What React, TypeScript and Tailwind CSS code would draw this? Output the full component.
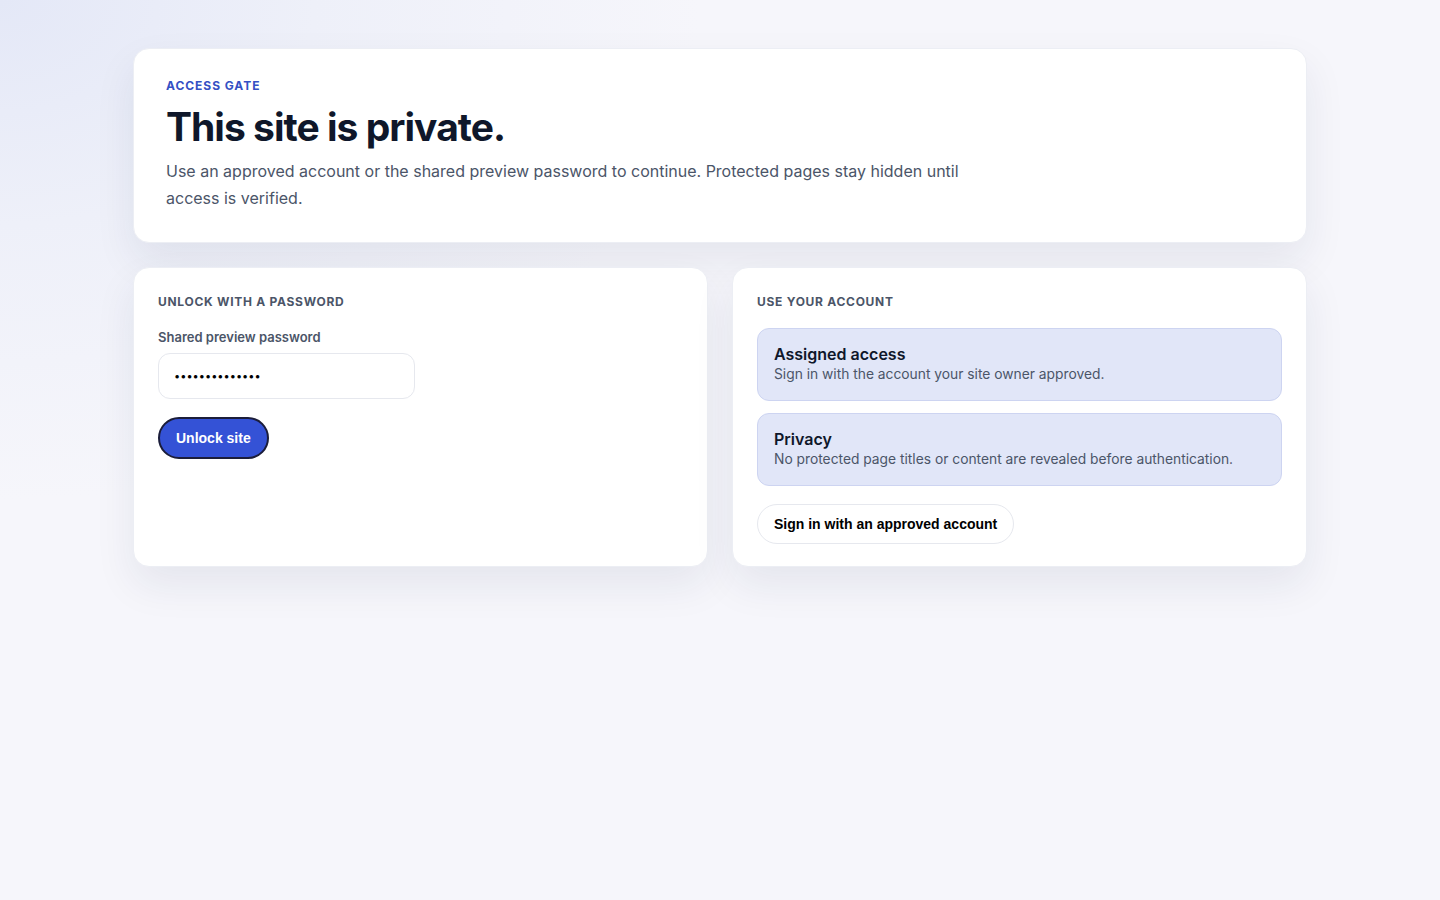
import React from 'react';

const infoCards = [
  { title: 'Assigned access', body: 'Sign in with the account your site owner approved.' },
  { title: 'Privacy', body: 'No protected page titles or content are revealed before authentication.' },
];

export default function App() {
  return (
    <div
      className="min-h-screen w-full bg-[#f6f6fb] bg-[radial-gradient(ellipse_700px_500px_at_0%_0%,#e4e8f7_0%,#eef0f9_45%,rgba(246,246,251,0)_100%)] text-slate-900"
      style={{ fontFamily: 'Inter, "Noto Sans", sans-serif' }}
    >
      <div className="mx-auto w-[1174px] pt-12 flex flex-col gap-6">
        {/* Header */}
        <section className="rounded-2xl border border-[#eceef4] bg-white px-8 pt-[29px] pb-[30px] shadow-[0_18px_40px_rgba(30,41,80,0.08)]">
          <p className="text-xs font-bold uppercase tracking-[0.08em] text-[#3450c4]">Access gate</p>
          <h1 className="mt-[9px] text-[39px] font-bold leading-[48px] tracking-[-0.025em] text-[#0f172a]">
            This site is private.
          </h1>
          <p className="mt-[7px] max-w-[820px] text-base leading-[27px] text-[#4b5568]">
            Use an approved account or the shared preview password to continue. Protected pages stay hidden until access is verified.
          </p>
        </section>

        <div className="grid grid-cols-2 gap-6">
          {/* Password */}
          <section className="h-[300px] rounded-2xl border border-[#eceef4] bg-white p-6 pt-[26px] shadow-[0_18px_40px_rgba(30,41,80,0.08)]">
            <h2 className="text-xs font-bold uppercase leading-4 tracking-[0.06em] text-[#4b5568]">Unlock with a password</h2>
            <label className="mt-[19px] block text-[13px] font-semibold leading-4 text-[#4b5568]">Shared preview password</label>
            <input
              type="password"
              defaultValue="previewaccess1"
              className="mt-2 block h-[46px] w-[257px] rounded-xl border border-[#e6e8ee] bg-white px-[15px] text-[11px] text-black outline-none"
            />
            <button
              className="mt-[18px] h-[42px] rounded-full border-2 border-[#1b1d3a] bg-[#3452d6] px-4 text-sm font-bold text-white"
              style={{ fontFamily: '"Liberation Sans", Arial, sans-serif' }}
            >
              Unlock site
            </button>
          </section>

          {/* Account */}
          <section className="h-[300px] rounded-2xl border border-[#eceef4] bg-white p-6 pt-[26px] shadow-[0_18px_40px_rgba(30,41,80,0.08)]">
            <h2 className="text-xs font-bold uppercase leading-4 tracking-[0.06em] text-[#4b5568]">Use your account</h2>
            <div className="mt-[18px] flex flex-col gap-3">
              {infoCards.map((c) => (
                <div key={c.title} className="h-[73px] rounded-xl border border-[#cdd4f1] bg-[#e1e6f8] px-4 pt-[15px]">
                  <h3 className="text-base font-semibold leading-5 text-[#0f172a]">{c.title}</h3>
                  <p className="text-[13.8px] leading-5 text-[#4b5568]">{c.body}</p>
                </div>
              ))}
            </div>
            <button
              className="mt-[18px] h-10 rounded-full border border-[#e6e8ee] bg-white px-4 text-sm font-bold text-black"
              style={{ fontFamily: '"Liberation Sans", Arial, sans-serif' }}
            >
              Sign in with an approved account
            </button>
          </section>
        </div>
      </div>
    </div>
  );
}
